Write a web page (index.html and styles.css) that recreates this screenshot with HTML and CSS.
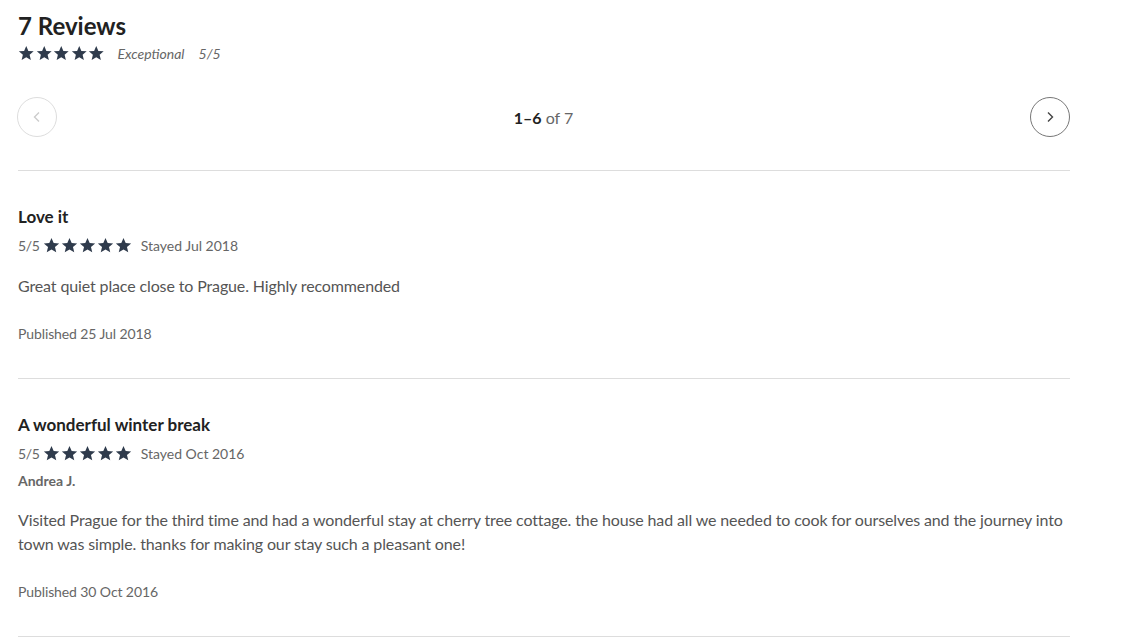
FILE: index.html
```html
<!DOCTYPE html>
<html lang="en">
<head>
    <meta charset="UTF-8">
    <title>Reviews</title>
    <link rel="stylesheet" href="styles.css">
</head>
<body>
    <div class="reviews">
        <div class="summary">
            <h1 class="summary-title">7 Reviews</h1>
            <div class="summary-rating">
                <span class="stars">
                    <svg viewBox="0 0 24 24"><path d="M12 1.5l3.1 7.1 7.7.6-5.9 5 1.8 7.5L12 17.7l-6.7 4 1.8-7.5-5.9-5 7.7-.6z"/></svg>
                    <svg viewBox="0 0 24 24"><path d="M12 1.5l3.1 7.1 7.7.6-5.9 5 1.8 7.5L12 17.7l-6.7 4 1.8-7.5-5.9-5 7.7-.6z"/></svg>
                    <svg viewBox="0 0 24 24"><path d="M12 1.5l3.1 7.1 7.7.6-5.9 5 1.8 7.5L12 17.7l-6.7 4 1.8-7.5-5.9-5 7.7-.6z"/></svg>
                    <svg viewBox="0 0 24 24"><path d="M12 1.5l3.1 7.1 7.7.6-5.9 5 1.8 7.5L12 17.7l-6.7 4 1.8-7.5-5.9-5 7.7-.6z"/></svg>
                    <svg viewBox="0 0 24 24"><path d="M12 1.5l3.1 7.1 7.7.6-5.9 5 1.8 7.5L12 17.7l-6.7 4 1.8-7.5-5.9-5 7.7-.6z"/></svg>
                </span>
                <span class="summary-label">Exceptional</span>
                <span class="summary-score">5/5</span>
            </div>
        </div>

        <div class="pager">
            <button class="pager-btn disabled" aria-label="Previous">
                <svg viewBox="0 0 16 16"><path d="M10 3.5L5.5 8l4.5 4.5"/></svg>
            </button>
            <div class="pager-count"><b>1–6</b> of 7</div>
            <button class="pager-btn" aria-label="Next">
                <svg viewBox="0 0 16 16"><path d="M6 3.5L10.5 8 6 12.5"/></svg>
            </button>
        </div>

        <div class="review">
            <h3 class="review-title">Love it</h3>
            <div class="review-meta">
                <span class="review-score">5/5</span>
                <span class="stars">
                    <svg viewBox="0 0 24 24"><path d="M12 1.5l3.1 7.1 7.7.6-5.9 5 1.8 7.5L12 17.7l-6.7 4 1.8-7.5-5.9-5 7.7-.6z"/></svg>
                    <svg viewBox="0 0 24 24"><path d="M12 1.5l3.1 7.1 7.7.6-5.9 5 1.8 7.5L12 17.7l-6.7 4 1.8-7.5-5.9-5 7.7-.6z"/></svg>
                    <svg viewBox="0 0 24 24"><path d="M12 1.5l3.1 7.1 7.7.6-5.9 5 1.8 7.5L12 17.7l-6.7 4 1.8-7.5-5.9-5 7.7-.6z"/></svg>
                    <svg viewBox="0 0 24 24"><path d="M12 1.5l3.1 7.1 7.7.6-5.9 5 1.8 7.5L12 17.7l-6.7 4 1.8-7.5-5.9-5 7.7-.6z"/></svg>
                    <svg viewBox="0 0 24 24"><path d="M12 1.5l3.1 7.1 7.7.6-5.9 5 1.8 7.5L12 17.7l-6.7 4 1.8-7.5-5.9-5 7.7-.6z"/></svg>
                </span>
                <span class="review-stayed">Stayed Jul 2018</span>
            </div>
            <p class="review-text">Great quiet place close to Prague. Highly recommended</p>
            <div class="review-date">Published 25 Jul 2018</div>
        </div>

        <div class="review">
            <h3 class="review-title">A wonderful winter break</h3>
            <div class="review-meta">
                <span class="review-score">5/5</span>
                <span class="stars">
                    <svg viewBox="0 0 24 24"><path d="M12 1.5l3.1 7.1 7.7.6-5.9 5 1.8 7.5L12 17.7l-6.7 4 1.8-7.5-5.9-5 7.7-.6z"/></svg>
                    <svg viewBox="0 0 24 24"><path d="M12 1.5l3.1 7.1 7.7.6-5.9 5 1.8 7.5L12 17.7l-6.7 4 1.8-7.5-5.9-5 7.7-.6z"/></svg>
                    <svg viewBox="0 0 24 24"><path d="M12 1.5l3.1 7.1 7.7.6-5.9 5 1.8 7.5L12 17.7l-6.7 4 1.8-7.5-5.9-5 7.7-.6z"/></svg>
                    <svg viewBox="0 0 24 24"><path d="M12 1.5l3.1 7.1 7.7.6-5.9 5 1.8 7.5L12 17.7l-6.7 4 1.8-7.5-5.9-5 7.7-.6z"/></svg>
                    <svg viewBox="0 0 24 24"><path d="M12 1.5l3.1 7.1 7.7.6-5.9 5 1.8 7.5L12 17.7l-6.7 4 1.8-7.5-5.9-5 7.7-.6z"/></svg>
                </span>
                <span class="review-stayed">Stayed Oct 2016</span>
            </div>
            <div class="review-author">Andrea J.</div>
            <p class="review-text">Visited Prague for the third time and had a wonderful stay at cherry tree cottage. the house had all we needed to cook for ourselves and the journey into town was simple. thanks for making our stay such a pleasant one!</p>
            <div class="review-date">Published 30 Oct 2016</div>
        </div>
    </div>
</body>
</html>
```

FILE: styles.css
```css
body {
    font-family: Lato, "Liberation Sans", sans-serif;
    margin: 0;
    padding: 0;
    background: #fff;
    color: #555;
}
.reviews {
    width: 1052px;
    margin-left: 18px;
}
.summary {
    padding-top: 11px;
}
.summary-title {
    margin: 0;
    font-size: 24px;
    line-height: 30px;
    font-weight: 700;
    color: #222;
}
.summary-rating {
    display: flex;
    align-items: center;
    height: 20px;
    margin-top: 2px;
}
.stars {
    display: inline-flex;
    gap: 1px;
}
.stars svg {
    width: 16.5px;
    height: 16.5px;
    fill: #2f3b4c;
}
.summary-label {
    margin-left: 13px;
    font-size: 14px;
    font-style: italic;
    color: #666;
}
.summary-score {
    margin-left: 14px;
    font-size: 14px;
    font-style: italic;
    color: #666;
}
.pager {
    display: flex;
    align-items: center;
    justify-content: space-between;
    margin-top: 34px;
    padding-bottom: 33px;
    border-bottom: 1px solid #ddd;
}
.pager-btn {
    width: 40px;
    height: 40px;
    border-radius: 50%;
    border: 1px solid #777;
    background: #fff;
    padding: 0;
    display: flex;
    align-items: center;
    justify-content: center;
    cursor: pointer;
}
.pager-btn:first-child {
    margin-left: -1px;
}
.pager-btn svg {
    width: 16px;
    height: 16px;
    fill: none;
    stroke: #444;
    stroke-width: 1.4;
}
.pager-btn.disabled {
    border-color: #ddd;
    cursor: default;
}
.pager-btn.disabled svg {
    stroke: #ccc;
}
.pager-count {
    font-size: 16px;
    color: #666;
}
.pager-count b {
    color: #222;
}
.review {
    padding: 34px 0 36px;
    border-bottom: 1px solid #ddd;
}
.review-title {
    margin: 0;
    font-size: 17px;
    line-height: 24px;
    font-weight: 700;
    color: #222;
}
.review-meta {
    display: flex;
    align-items: center;
    margin-top: 6px;
    height: 20px;
    font-size: 14px;
    color: #666;
}
.review-meta .stars svg {
    width: 17px;
    height: 17px;
}
.review-score {
    margin-right: 3px;
    letter-spacing: -0.3px;
}
.review-stayed {
    margin-left: 9px;
}
.review-author {
    margin-top: 9px;
    font-size: 14px;
    font-weight: 700;
    color: #666;
}
.review-text {
    margin: 19px 0 0;
    font-size: 16px;
    line-height: 24px;
    letter-spacing: -0.13px;
    color: #555;
}
.review-date {
    margin-top: 27px;
    font-size: 14px;
    letter-spacing: -0.1px;
    color: #666;
}
```
